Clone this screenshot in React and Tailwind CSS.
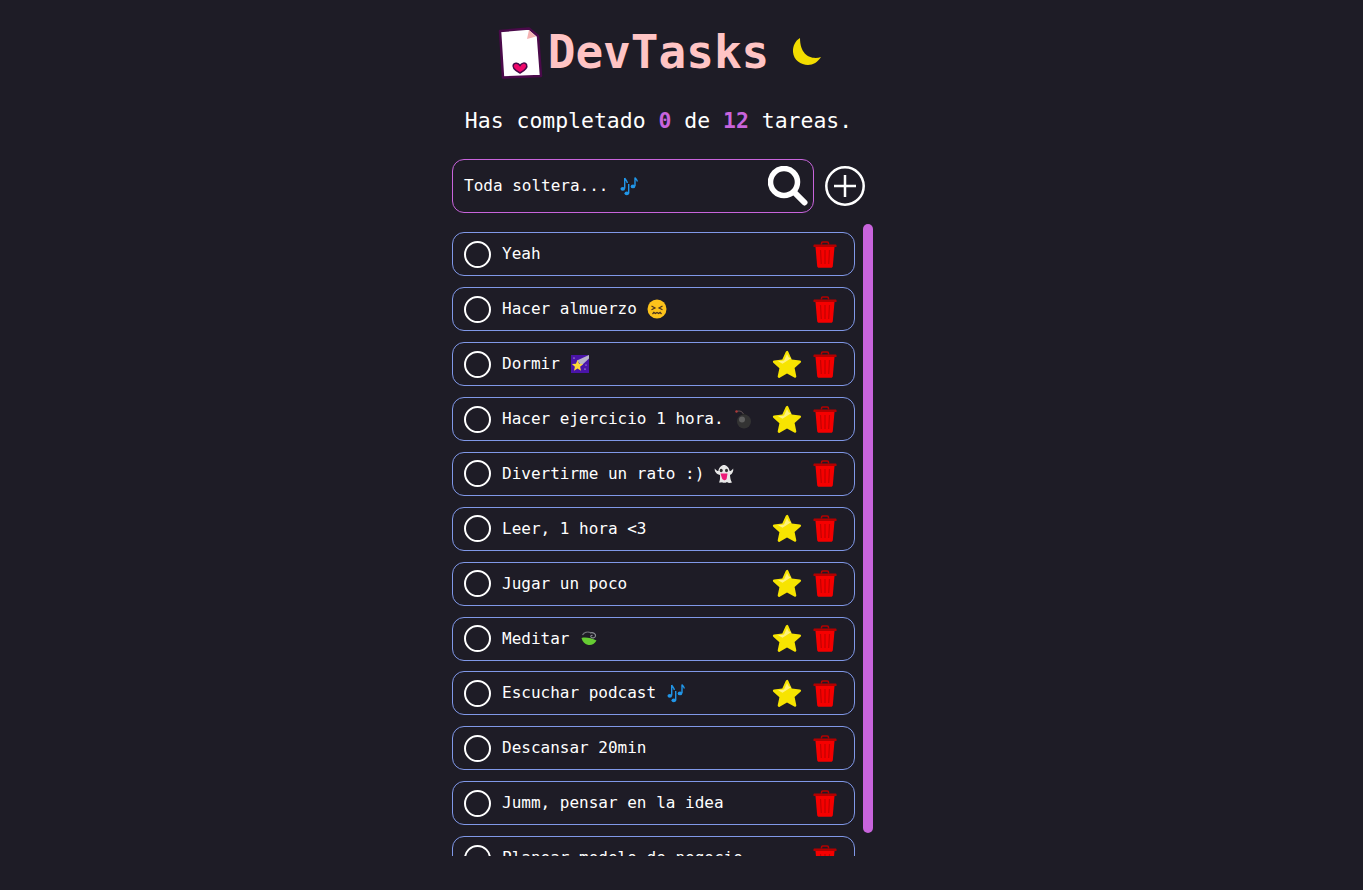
const TASKS = [
  { text: "Yeah" },
  { text: "Hacer almuerzo", emoji: "face" },
  { text: "Dormir", emoji: "shooting", star: true },
  { text: "Hacer ejercicio 1 hora.", emoji: "bomb", star: true },
  { text: "Divertirme un rato :)", emoji: "ghost" },
  { text: "Leer, 1 hora <3", star: true },
  { text: "Jugar un poco", star: true },
  { text: "Meditar", emoji: "leaf", star: true },
  { text: "Escuchar podcast", emoji: "notes", star: true },
  { text: "Descansar 20min" },
  { text: "Jumm, pensar en la idea" },
  { text: "Planear modelo de negocio" },
];

function Notes() {
  return (
    <svg width="20" height="20" viewBox="0 0 20 20" className="shrink-0" fill="none" stroke="#2196e8" strokeWidth="1.400">
      <path d="M5.700 2v10.500M5.700 2c.6 2 2.400 2.500 2.600 5" />
      <ellipse cx="3.800" cy="12.800" rx="2.300" ry="1.900" fill="#2196e8" stroke="none" />
      <path d="M16 1.500V10M16 1.500c.5 1.500 2 2 2.300 4" />
      <ellipse cx="14" cy="10.400" rx="2.300" ry="1.900" fill="#2196e8" stroke="none" />
      <path d="M9.700 8v9" />
      <ellipse cx="7.800" cy="17.300" rx="2.300" ry="1.900" fill="#2196e8" stroke="none" />
    </svg>
  );
}

function Face() {
  return (
    <svg width="20" height="20" viewBox="0 0 20 20" className="shrink-0">
      <circle cx="10" cy="10" r="9.500" fill="#fcc21b" />
      <path d="M4.500 7l3.500 2-3.500 1.700M15.500 7l-3.500 2 3.500 1.700" fill="none" stroke="#4a3320" strokeWidth="1.200" />
      <path d="M5.500 15l1.400-1.600 1.500 1.100 1.600-1.100 1.600 1.100 1.500-1.100 1.400 1.600" fill="none" stroke="#4a3320" strokeWidth="1.200" />
    </svg>
  );
}

function Shooting() {
  return (
    <svg width="20" height="20" viewBox="0 0 20 20" className="shrink-0">
      <rect x="1" y="1" width="18" height="18" fill="#4a14a8" />
      <path d="M19 1 7 6.500l4.500 5L19 4.500z" fill="#b9b4c9" />
      <path d="m7.500 6 1.600 3.700 4 .4-3 2.600.9 4-3.500-2.100L4 16.700l.9-4-3-2.600 4-.4z" fill="#fdd835" />
      <circle cx="4" cy="4" r=".6" fill="#fff" />
      <circle cx="15" cy="15" r=".6" fill="#fff" />
      <circle cx="16" cy="11" r=".5" fill="#fff" />
    </svg>
  );
}

function Bomb() {
  return (
    <svg width="20" height="20" viewBox="0 0 20 20" className="shrink-0">
      <path d="M2.500 2.500c2.500-1 6-.5 7 3" fill="none" stroke="#6b5b5b" strokeWidth="1" />
      <circle cx="2.500" cy="2.500" r="1.200" fill="#b03a3a" />
      <rect x="7.500" y="5" width="5" height="3" fill="#222" />
      <circle cx="10" cy="12.500" r="7" fill="#333" />
      <circle cx="8" cy="10.500" r="3" fill="#5f5f5f" />
    </svg>
  );
}

function Ghost() {
  return (
    <svg width="20" height="20" viewBox="0 0 20 20" className="shrink-0">
      <path d="M.8 4.500c1.500 2 2.500 2.500 3.500 2.500C5 3.500 7.500 1 10 1s5 2.500 5.700 6c1 0 2-.5 3.500-2.500.5 2.500-.8 5.500-3.200 6.500.2 3 .5 5 2 7.500-2 .8-4 .5-5-.5-1.500 1-3.500 1.200-5 .2-1 .5-2 .5-3 .3 1-2 1.200-4.500 1-7.500C2 10 .3 7 .8 4.500z" fill="#e8e8e8" />
      <ellipse cx="7.200" cy="6.500" rx="1.500" ry="1.700" fill="#2f2f2f" />
      <ellipse cx="12.500" cy="6.500" rx="1.500" ry="1.700" fill="#2f2f2f" />
      <path d="M6.500 9.500h7l-.8 5c-.3 1.500-2 2-3 1.500s-1.500-1-1.800-2z" fill="#ec1a78" />
    </svg>
  );
}

function Leaf() {
  return (
    <svg width="20" height="20" viewBox="0 0 20 20" className="shrink-0">
      <path d="M3.500 6c1.500-2.500 5-3.500 8-2.500" fill="none" stroke="#6f7278" strokeWidth="1.200" />
      <path d="M11 4c3-1 6 .5 5.500 3-.4 2-3.500 2.500-4.500 1-.6-1 .5-2 1.500-1.500" fill="none" stroke="#8a8d92" strokeWidth="1.200" />
      <path d="M2.500 9c4-1 10 0 15 2.500-2 3.500-5 5-8 4.500C6 15.500 3.500 13 2.500 9z" fill="#66cc33" />
    </svg>
  );
}

const EMOJIS = { notes: Notes, face: Face, shooting: Shooting, bomb: Bomb, ghost: Ghost, leaf: Leaf };

function Star() {
  return (
    <svg width="30" height="29" viewBox="0 0 30 29" className="shrink-0">
      <path
        d="M15 .800c.6 0 1 .4 1.300 1l3.400 7.700 8.200.9c1.200.1 1.600 1.500.8 2.200l-6.100 5.500 1.700 8.100c.2 1.100-1 2-2 1.400L15 23.600l-7.300 4.100c-1 .6-2.200-.3-2-1.400l1.700-8.100-6.100-5.500c-.8-.7-.4-2.100.8-2.200l8.200-.9 3.400-7.700c.3-.6.700-1 1.300-1z"
        fill="#f7e400"
      />
      <path d="M15 4l-3 6.500-6 .8 4.500 2.500L19.500 8l-2.700-.5z" fill="#fff27a" />
    </svg>
  );
}

function Trash() {
  return (
    <svg width="24" height="27" viewBox="0 0 24 27" className="shrink-0">
      <path d="M8.500 3.500V2.200C8.500 1.500 9 1 9.700 1h4.600c.7 0 1.200.5 1.200 1.200v1.300" fill="none" stroke="#b30000" strokeWidth="1.500" />
      <path d="M1.500 3.500h21c.6 0 1 .4 1 1V6H.5V4.500c0-.6.400-1 1-1z" fill="#b30000" />
      <path d="M2.500 6h19l-1.700 19.300c-.1.900-.8 1.500-1.600 1.500H5.800c-.8 0-1.500-.6-1.600-1.500z" fill="#f50000" />
      <path d="M7.500 9l.8 14M12 9v14M16.500 9l-.8 14" stroke="#c40000" strokeWidth="1.200" fill="none" />
    </svg>
  );
}

function Logo() {
  return (
    <svg width="46" height="53" viewBox="0 0 46 53" className="shrink-0">
      <path d="M3 5 32 2.500l9 7.500 3 40-38 1.500z" fill="#fff" stroke="#4a0a4a" strokeWidth="2.500" strokeLinejoin="round" />
      <path d="M32 4l7 6.500-9 2.500z" fill="#f4b2b2" />
      <path d="M23 47c-6-3-8-6-6.500-8.500 1.200-2 4.700-1.500 6.500 1 1.500-2.500 5-3.500 6.500-1 1.200 2.500-1 5.500-6.500 8.500z" fill="#f0086a" stroke="#4a0a4a" strokeWidth="1.500" />
    </svg>
  );
}

function Moon() {
  return (
    <svg width="30" height="30" viewBox="0 0 30 30" className="shrink-0">
      <path d="M8 1C3 4 .8 9 1 15c.5 8 8 13 15 13 5 0 10-3 13-8-9 3-21-1-21-19z" fill="#f2dc00" />
    </svg>
  );
}

function TaskRow({ task }) {
  const Emoji = EMOJIS[task.emoji];
  return (
    <li className="flex h-[44px] shrink-0 items-center rounded-xl border border-[#8098e8] pl-[11px] pr-[17px]">
      <span className="h-[27px] w-[27px] shrink-0 rounded-full border-2 border-white" />
      <p className="ml-[11px] flex flex-1 items-center gap-[10px] whitespace-nowrap text-base text-white">
        {task.text}
        {Emoji && <Emoji />}
      </p>
      {task.star && <Star />}
      <span className="ml-[11px]"><Trash /></span>
    </li>
  );
}

export default function App() {
  return (
    <div className="flex h-[890px] flex-col items-center overflow-hidden bg-[#1e1c26] pr-[38px] font-['DejaVu_Sans_Mono',monospace] text-white">
      <header className="mt-[24px] flex h-[56px] items-center pr-[6px]">
        <Logo />
        <h1 className="ml-[5px] text-[46px] font-bold text-[#ffc4c4]">DevTasks</h1>
        <span className="ml-[23px]"><Moon /></span>
      </header>
      <p className="mt-[25px] pr-[8px] text-[21.440px]">
        Has completado <b className="text-[#c864dc]">0</b> de <b className="text-[#c864dc]">12</b> tareas.
      </p>
      <div className="mt-[22px] w-[421px]">
        <div className="flex items-center">
          <div className="flex h-[54px] w-[362px] items-center rounded-xl border border-[#c864dc] pl-[11px] pr-[5px]">
            <span className="flex flex-1 items-center gap-[10px] text-base">Toda soltera... <Notes /></span>
            <svg width="40" height="40" viewBox="0 0 40 40" fill="none" stroke="#fff" className="shrink-0">
              <circle cx="16" cy="16" r="13.500" strokeWidth="5.500" />
              <path d="M26 26l10.500 10.500" strokeWidth="6" strokeLinecap="round" />
            </svg>
          </div>
          <svg width="40" height="40" viewBox="0 0 40 40" fill="none" stroke="#fff" strokeWidth="2.500" className="ml-[11px] shrink-0">
            <circle cx="20" cy="20" r="18.700" />
            <path d="M20 9v22M9 20h22" strokeWidth="2.500" />
          </svg>
        </div>
        <div className="mt-[11px] flex h-[632px] gap-2 overflow-hidden">
          <ul className="mt-[8.200px] flex w-[403px] flex-col gap-[10.900px]">
            {TASKS.map((task) => (
              <TaskRow key={task.text} task={task} />
            ))}
          </ul>
          <div className="h-[609px] w-[10px] rounded-full bg-[#c864dc]" />
        </div>
      </div>
    </div>
  );
}
